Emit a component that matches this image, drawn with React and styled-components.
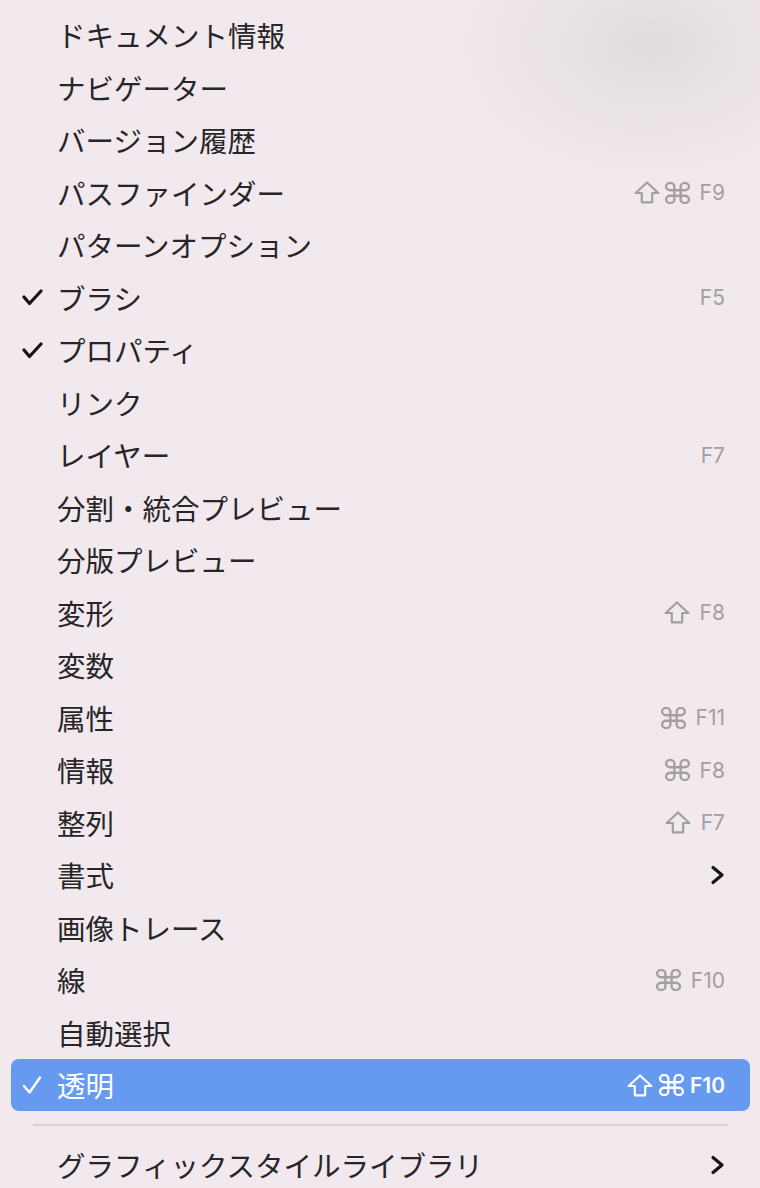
import React from 'react';
import styled, { createGlobalStyle } from 'styled-components';

const GlobalStyle = createGlobalStyle`
  html, body {
    margin: 0;
    padding: 0;
    background: #f1e9ed;
  }
`;

const Root = styled.div`
  width: 760px;
  height: 1188px;
  overflow: hidden;
  box-sizing: border-box;
  padding: 9px 10px 0 11px;
  background-color: #f1e9ed;
  background-image: radial-gradient(
    ellipse 190px 130px at 650px 45px,
    rgba(208, 203, 206, 0.5),
    rgba(208, 203, 206, 0.25) 45%,
    rgba(208, 203, 206, 0) 100%
  );
  font-family: 'Noto Sans CJK JP', 'Noto Sans', sans-serif;
`;

const Row = styled.div`
  display: flex;
  align-items: center;
  height: ${({ $h }) => $h || 52.5}px;
  padding: 0 25px 0 11px;
  border-radius: 8px;
  background: ${({ $active }) => ($active ? '#659af0' : 'transparent')};
  color: ${({ $active }) => ($active ? '#fff' : '#272527')};
`;

const CheckCell = styled.div`
  width: 35px;
  flex: none;
  display: flex;
  align-items: center;
`;

const Label = styled.div`
  flex: 1;
  font-size: 28.5px;
  line-height: 1;
  white-space: nowrap;
`;

const Shortcut = styled.div`
  display: flex;
  align-items: center;
  gap: ${({ $active }) => ($active ? 6 : 5)}px;
  color: ${({ $active }) => ($active ? '#fff' : '#a39fa1')};
  font-family: 'Inter', 'Liberation Sans', sans-serif;
  font-size: 21px;
  font-weight: ${({ $active }) => ($active ? 600 : 400)};
  line-height: 1;
`;

const Key = styled.span`
  margin-left: ${({ $active }) => ($active ? 0 : 5)}px;
`;

const Separator = styled.div`
  height: 28px;
  display: flex;
  align-items: center;
  padding: 0 22px;

  &::after {
    content: '';
    flex: 1;
    height: 2px;
    background: #d8d2d5;
  }
`;

const Check = ({ active }) =>
  active ? (
    <svg width="20" height="20" viewBox="0 0 20 20">
      <path d="M2 11 L7.5 17.5 L18 2.5" fill="none" stroke="#fff" strokeWidth="2.4" strokeLinecap="round" strokeLinejoin="round" />
    </svg>
  ) : (
    <svg width="21" height="17" viewBox="0 0 21 17">
      <path d="M2 8 L7.5 14.5 L19 2" fill="none" stroke="#161416" strokeWidth="3.2" strokeLinecap="round" strokeLinejoin="round" />
    </svg>
  );

const ShiftIcon = () => (
  <svg width="26" height="23" viewBox="0 0 26 23">
    <path d="M13 1.5 L24.3 12 H18.2 V21.3 H7.8 V12 H1.7 Z" fill="none" stroke="currentColor" strokeWidth="2.2" strokeLinejoin="round" />
  </svg>
);

const CmdIcon = () => (
  <svg width="25" height="22" viewBox="0 0 24 24" preserveAspectRatio="none">
    <path
      d="M15 5v14a4 4 0 1 0 4-4H5a4 4 0 1 0 4 4V5a4 4 0 1 0-4 4h14a4 4 0 1 0-4-4"
      fill="none"
      stroke="currentColor"
      strokeWidth="2.3"
      vectorEffect="non-scaling-stroke"
      strokeLinecap="round"
      strokeLinejoin="round"
    />
  </svg>
);

const Chevron = () => (
  <svg width="15" height="20" viewBox="0 0 15 20">
    <path d="M3 2.5 L12 10 L3 17.5" fill="none" stroke="#161416" strokeWidth="3.2" strokeLinecap="round" strokeLinejoin="round" />
  </svg>
);

const items = [
  { label: 'ドキュメント情報' },
  { label: 'ナビゲーター' },
  { label: 'バージョン履歴' },
  { label: 'パスファインダー', shift: true, cmd: true, key: 'F9' },
  { label: 'パターンオプション' },
  { label: 'ブラシ', checked: true, key: 'F5' },
  { label: 'プロパティ', checked: true },
  { label: 'リンク' },
  { label: 'レイヤー', key: 'F7' },
  { label: '分割・統合プレビュー' },
  { label: '分版プレビュー' },
  { label: '変形', shift: true, key: 'F8' },
  { label: '変数' },
  { label: '属性', cmd: true, key: 'F11' },
  { label: '情報', cmd: true, key: 'F8' },
  { label: '整列', shift: true, key: 'F7' },
  { label: '書式', submenu: true },
  { label: '画像トレース' },
  { label: '線', cmd: true, key: 'F10' },
  { label: '自動選択' },
  { label: '透明', checked: true, active: true, shift: true, cmd: true, key: 'F10' },
  { separator: true },
  { label: 'グラフィックスタイルライブラリ', submenu: true },
];

const MenuRow = ({ item }) => (
  <Row $active={item.active} $h={item.active ? 52 : 52.5}>
    <CheckCell>{item.checked && <Check active={item.active} />}</CheckCell>
    <Label>{item.label}</Label>
    {item.key && (
      <Shortcut $active={item.active}>
        {item.shift && <ShiftIcon />}
        {item.cmd && <CmdIcon />}
        <Key $active={item.active}>{item.key}</Key>
      </Shortcut>
    )}
    {item.submenu && <Chevron />}
  </Row>
);

export default function App() {
  return (
    <Root>
      <GlobalStyle />
      {items.map((item, i) =>
        item.separator ? <Separator key={i} /> : <MenuRow key={i} item={item} />
      )}
    </Root>
  );
}
